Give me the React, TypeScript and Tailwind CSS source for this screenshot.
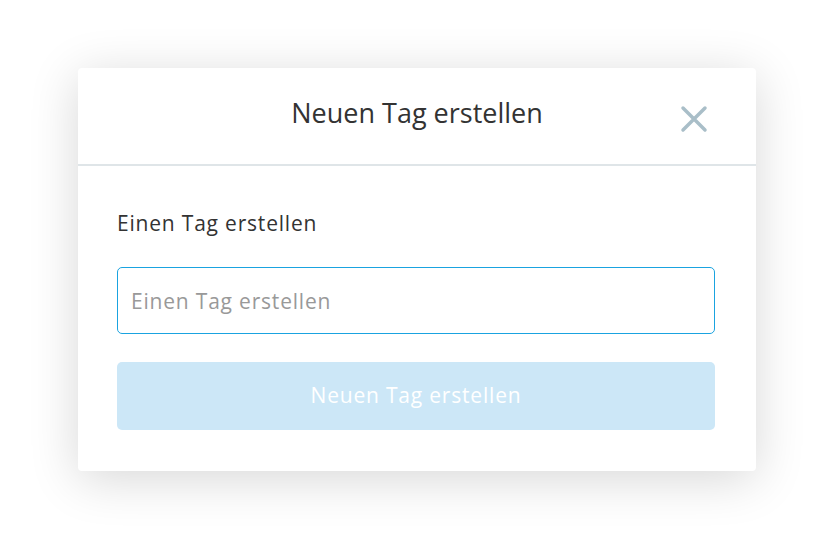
export default function App() {
  return (
    <div className="w-[834px] h-[540px] bg-white flex items-start justify-center pt-[68px] font-['Open_Sans',sans-serif]">
      <div className="w-[678px] h-[403px] bg-white rounded-[4px] shadow-[0_8px_50px_rgba(0,0,0,0.16)] flex flex-col">
        <div className="relative h-[98px] flex items-center justify-center pb-[6px] border-b-2 border-[#dfe5e8]">
          <h1 className="text-[27px] text-[#333] font-medium">Neuen Tag erstellen</h1>
          <button className="absolute right-[48px] top-[37px] w-[28px] h-[28px]">
            <svg viewBox="0 0 28 28" className="w-[28px] h-[28px]">
              <path d="M3 3L25 25M25 3L3 25" stroke="#a9bec8" strokeWidth="3.5" strokeLinecap="round" />
            </svg>
          </button>
        </div>
        <div className="px-[39px] pt-[42px] flex flex-col">
          <label className="text-[21px] text-[#333] font-medium tracking-[0.8px] leading-[30px]">Einen Tag erstellen</label>
          <input
            placeholder="Einen Tag erstellen"
            className="mt-[29px] h-[67px] w-[598px] rounded-[5px] border border-[#1aa3e0] px-[13px] text-[21px] tracking-[0.8px] text-[#333] placeholder:text-[#999] outline-none"
          />
          <button className="mt-[28px] h-[68px] w-[598px] rounded-[5px] bg-[#cce7f7] text-white text-[21px] tracking-[0.8px]">
            Neuen Tag erstellen
          </button>
        </div>
      </div>
    </div>
  );
}
